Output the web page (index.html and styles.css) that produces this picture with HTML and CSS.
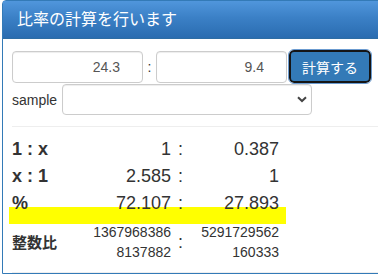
FILE: index.html
```html
<!DOCTYPE html>
<html lang="ja">
<head>
  <meta charset="utf-8">
  <title>比率の計算</title>
  <link rel="stylesheet" href="styles.css">
</head>
<body>
  <div class="panel">
    <div class="panel-heading">
      <h3 class="panel-title">比率の計算を行います</h3>
    </div>
    <div class="panel-body">
      <form class="ratio-form">
        <div class="input-row">
          <input type="text" class="form-control num" value="24.3">
          <span class="sep">:</span>
          <input type="text" class="form-control num" value="9.4">
          <button type="button" class="btn-calc">計算する</button>
        </div>
        <div class="sample-row">
          <label class="sample-label">sample</label>
          <div class="select-wrap">
            <select class="form-control sample-select">
              <option></option>
            </select>
            <!-- dropdown arrow -->
            <svg class="chevron" width="10" height="7" viewBox="0 0 10 7">
              <path d="M1 1.2 L5 5 L9 1.2" fill="none" stroke="#444" stroke-width="2"/>
            </svg>
          </div>
        </div>
      </form>
      <hr class="rule">
      <div class="results">
        <div class="row">
          <span class="label">1 : x</span>
          <span class="val">1</span>
          <span class="colon">:</span>
          <span class="val">0.387</span>
        </div>
        <div class="row">
          <span class="label">x : 1</span>
          <span class="val">2.585</span>
          <span class="colon">:</span>
          <span class="val">1</span>
        </div>
        <div class="row mark">
          <span class="label">%</span>
          <span class="val">72.107</span>
          <span class="colon">:</span>
          <span class="val">27.893</span>
        </div>
        <div class="row int-row">
          <span class="label cjk">整数比</span>
          <span class="val small">1367968386<br>8137882</span>
          <span class="colon">:</span>
          <span class="val small">5291729562<br>160333</span>
        </div>
      </div>
      <hr class="rule bottom">
    </div>
  </div>
</body>
</html>
```

FILE: styles.css
```css
* {
  box-sizing: border-box;
}
html, body {
  margin: 0;
  padding: 0;
  overflow: hidden;
}
body {
  font-family: 'Liberation Sans', Arial, 'Noto Sans CJK JP', sans-serif;
  font-size: 14px;
  line-height: 20px;
  color: #333;
  background: #fff;
}
.panel {
  width: 420px;
  margin-left: 2px;
  border: 1px solid #337ab7;
  border-radius: 4px 0 0 0;
  background: #fff;
}
.panel-heading {
  background: linear-gradient(#5096dc 0%, #3b80c6 45%, #2a6cb0 100%);
  padding: 10px 15px 10px 14px;
  height: 38px;
  border-bottom: 1px solid #2e6da4;
}
.panel-title {
  margin: 0;
  font-size: 16px;
  font-weight: normal;
  line-height: 18px;
  color: #fff;
}
.panel-body {
  padding: 11px 0 0 9px;
}
.input-row {
  display: flex;
  align-items: center;
}
.form-control {
  height: 32px;
  border: 1px solid #ccc;
  border-radius: 4px;
  box-shadow: inset 0 1px 1px rgba(0, 0, 0, 0.075);
  font-family: inherit;
  font-size: 14px;
  color: #555;
  background: #fff;
}
.num {
  width: 131px;
  padding: 6px 22px 6px 12px;
  text-align: right;
}
.sep {
  width: 13px;
  text-align: center;
  color: #333;
}
.btn-calc {
  margin-left: 2px;
  width: 82px;
  height: 33px;
  background: #337ab7;
  color: #fff;
  font-family: inherit;
  font-size: 14px;
  border: 2px solid #151515;
  border-radius: 5px;
  outline: 1px solid #6b9bd0;
  padding: 0;
}
.sample-row {
  display: flex;
  align-items: center;
  margin-top: 1px;
}
.sample-label {
  width: 50px;
  color: #333;
}
.select-wrap {
  position: relative;
}
.sample-select {
  width: 250px;
  height: 31px;
  -webkit-appearance: none;
  appearance: none;
  padding: 4px 12px;
}
.chevron {
  position: absolute;
  left: 235px;
  top: 12px;
}
.rule {
  margin: 11px 0 0 0;
  border: 0;
  border-top: 1px solid #eee;
}
.rule.bottom {
  margin-top: 10px;
}
.results {
  margin-top: 9px;
}
.row {
  display: grid;
  grid-template-columns: 77px 82px 19px 89px;
  align-items: center;
  width: 267px;
  height: 27px;
  font-size: 18px;
  line-height: 27px;
  position: relative;
  z-index: 0;
}
.label {
  font-weight: bold;
}
.label.cjk {
  font-size: 15px;
}
.val {
  text-align: right;
}
.colon {
  text-align: center;
}
.mark::before {
  content: '';
  position: absolute;
  left: -3px;
  right: -7px;
  top: 17px;
  height: 17px;
  background: #ff0;
  z-index: -1;
}
.int-row {
  height: auto;
  padding-top: 5px;
}
.val.small {
  font-size: 14px;
  line-height: 20px;
}
```
